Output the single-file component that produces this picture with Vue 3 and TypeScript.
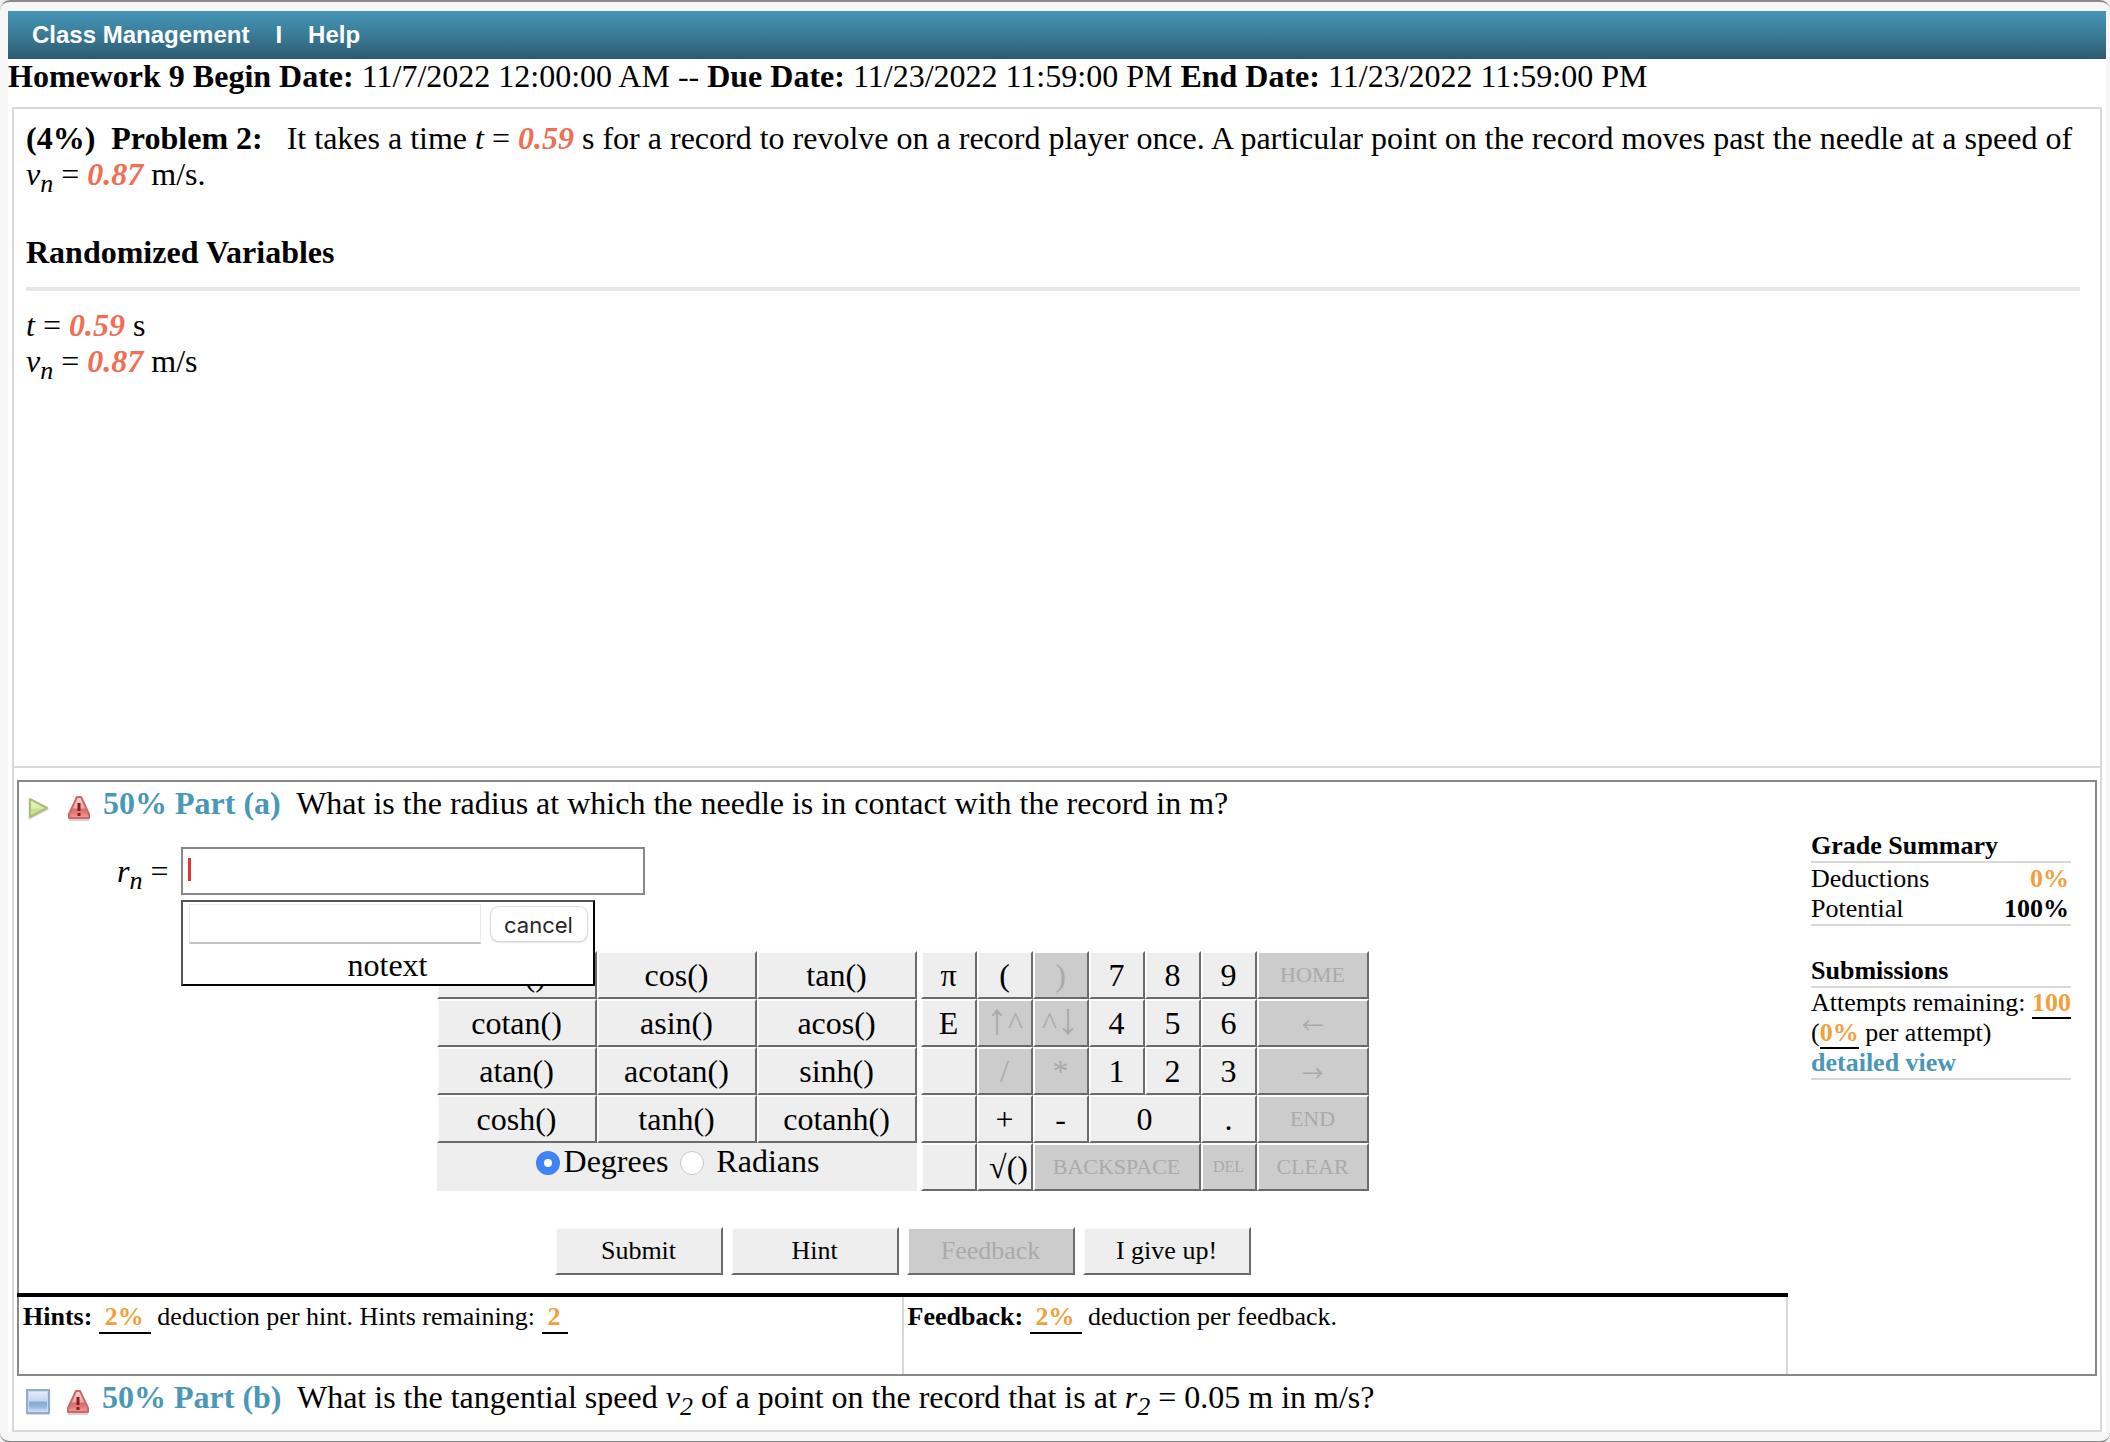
<script setup lang="ts">
import { ref } from 'vue'

interface Key {
  label: string
  disabled?: boolean
  size?: 'small' | 'tiny' | 'arrow'
  span?: 'two' | 'three'
  shifted?: boolean
}

const functionKeys: string[] = [
  'sin()', 'cos()', 'tan()',
  'cotan()', 'asin()', 'acos()',
  'atan()', 'acotan()', 'sinh()',
  'cosh()', 'tanh()', 'cotanh()',
]

const padKeys: Key[] = [
  { label: 'π' },
  { label: '(' },
  { label: ')', disabled: true },
  { label: '7' },
  { label: '8' },
  { label: '9' },
  { label: 'HOME', disabled: true, size: 'small' },
  { label: 'E' },
  { label: '↑^', disabled: true },
  { label: '^↓', disabled: true },
  { label: '4' },
  { label: '5' },
  { label: '6' },
  { label: '←', disabled: true, size: 'arrow' },
  { label: '' },
  { label: '/', disabled: true },
  { label: '*', disabled: true },
  { label: '1' },
  { label: '2' },
  { label: '3' },
  { label: '→', disabled: true, size: 'arrow' },
  { label: '' },
  { label: '+' },
  { label: '-' },
  { label: '0', span: 'two' },
  { label: '.' },
  { label: 'END', disabled: true, size: 'small' },
  { label: '' },
  { label: '√()', shifted: true },
  { label: 'BACKSPACE', disabled: true, size: 'small', span: 'three' },
  { label: 'DEL', disabled: true, size: 'tiny' },
  { label: 'CLEAR', disabled: true, size: 'small' },
]

const actions: Key[] = [
  { label: 'Submit' },
  { label: 'Hint' },
  { label: 'Feedback', disabled: true },
  { label: 'I give up!' },
]

const answer = ref('')
const macro = ref('')
const angle = ref('degrees')

// Splits off the vertical arrows, which are set larger than the caret beside them.
function pieces(label: string): string[] {
  return label.split(/([↑↓])/).filter((s) => s !== '')
}

function isVertical(piece: string): boolean {
  return piece === '↑' || piece === '↓'
}
</script>

<template>
  <div class="window">
    <div class="page">
      <nav class="menu">
        <a href="#">Class Management</a>
        <span>I</span>
        <a href="#">Help</a>
      </nav>

      <p class="dates">
        <b>Homework 9 Begin Date:</b> 11/7/2022 12:00:00 AM -- <b>Due Date:</b> 11/23/2022 11:59:00 PM
        <b>End Date:</b> 11/23/2022 11:59:00 PM
      </p>

      <main class="assignment">
        <section class="problem">
          <p>
            <b>(4%)&nbsp; Problem 2:</b>&nbsp;&nbsp; It takes a time <i>t</i> = <em>0.59</em> s for a record to
            revolve on a record player once. A particular point on the record moves past the needle at a speed of
            <i>v<sub>n</sub></i> = <em>0.87</em> m/s.
          </p>
          <h2>Randomized Variables</h2>
          <hr />
          <p><i>t</i> = <em>0.59</em> s</p>
          <p><i>v<sub>n</sub></i> = <em>0.87</em> m/s</p>
        </section>

        <section class="part">
          <div class="work">
            <div class="question">
              <svg class="icon" viewBox="0 0 24 26" aria-hidden="true">
                <defs>
                  <linearGradient id="play" x1="0" y1="0" x2="0" y2="1">
                    <stop offset="0" stop-color="#e9f2c4" />
                    <stop offset="0.5" stop-color="#dcebae" />
                    <stop offset="0.6" stop-color="#c6dd8c" />
                    <stop offset="1" stop-color="#d9eaaa" />
                  </linearGradient>
                </defs>
                <path d="M3 5 L20 14 L3 23 Z" fill="none" stroke="#dcdfd4" stroke-width="3" stroke-linejoin="round" />
                <path d="M3 4 L20 13 L3 22 Z" fill="url(#play)" stroke="#a9bf78" stroke-width="2" stroke-linejoin="round" />
              </svg>
              <svg class="icon" viewBox="0 0 24 26" aria-hidden="true">
                <defs>
                  <linearGradient id="warn" x1="0" y1="0" x2="0" y2="1">
                    <stop offset="0" stop-color="#f6d6d4" />
                    <stop offset="0.5" stop-color="#eda9a7" />
                    <stop offset="0.6" stop-color="#dd6a68" />
                    <stop offset="1" stop-color="#ec9a98" />
                  </linearGradient>
                </defs>
                <path d="M2 25 H22" stroke="#d9cfcf" stroke-width="2" />
                <path d="M10 2 H14 L22 19 V23 H2 V19 Z" fill="url(#warn)" stroke="#c9686a" stroke-width="2" stroke-linejoin="round" />
                <path d="M12 8 V16 M12 18 V21" stroke="#8c1a1c" stroke-width="3" />
              </svg>
              <h3><b>50% Part (a)</b>&nbsp; What is the radius at which the needle is in contact with the record in m?</h3>
            </div>

            <div class="answer">
              <label for="answer"><i>r<sub>n</sub></i> =</label>
              <div class="field">
                <input id="answer" v-model="answer" type="text" autocomplete="off" />
                <div class="popup">
                  <div class="popup-row">
                    <input v-model="macro" type="text" aria-label="Macro" />
                    <button type="button">cancel</button>
                  </div>
                  <div class="popup-text">notext</div>
                </div>
              </div>
            </div>

            <div class="keyboard">
              <div class="functions">
                <button v-for="k in functionKeys" :key="k" type="button" class="key">{{ k }}</button>
                <div class="angles">
                  <input id="deg" v-model="angle" type="radio" name="angle" value="degrees" />
                  <label for="deg">Degrees</label>
                  <input id="rad" v-model="angle" type="radio" name="angle" value="radians" />
                  <label for="rad" class="spaced">Radians</label>
                </div>
              </div>
              <div class="pad">
                <button
                  v-for="(k, i) in padKeys"
                  :key="i"
                  type="button"
                  class="key"
                  :class="[k.size, k.span, { shifted: k.shifted }]"
                  :disabled="k.disabled"
                ><span v-for="(p, j) in pieces(k.label)" :key="j" :class="{ tall: isVertical(p) }">{{ p }}</span></button>
              </div>
            </div>

            <div class="actions">
              <button v-for="a in actions" :key="a.label" type="button" class="key" :disabled="a.disabled">{{ a.label }}</button>
            </div>

            <div class="hints">
              <div>
                <b>Hints:</b> <span class="value padded">2%</span> deduction per hint. Hints remaining:
                <span class="value padded">2</span>
              </div>
              <div><b>Feedback:</b> <span class="value padded">2%</span> deduction per feedback.</div>
            </div>
          </div>

          <aside class="summary">
            <h4>Grade Summary</h4>
            <table>
              <tbody>
                <tr>
                  <th scope="row">Deductions</th>
                  <td class="amount">0%</td>
                </tr>
                <tr>
                  <th scope="row">Potential</th>
                  <td>100%</td>
                </tr>
              </tbody>
            </table>
            <h4 class="second">Submissions</h4>
            <div class="attempts">
              <div>Attempts remaining: <span class="value">100</span></div>
              <div>(<span class="value">0%</span> per attempt)</div>
              <div><a href="#">detailed view</a></div>
            </div>
          </aside>
        </section>

        <div class="question last">
          <svg class="icon" viewBox="0 0 24 26" aria-hidden="true">
            <defs>
              <linearGradient id="box" x1="0" y1="0" x2="0" y2="1">
                <stop offset="0" stop-color="#e3ecf8" />
                <stop offset="0.45" stop-color="#c3d6ee" />
                <stop offset="0.55" stop-color="#86abda" />
                <stop offset="0.75" stop-color="#8fb2de" />
                <stop offset="1" stop-color="#c4daf2" />
              </linearGradient>
            </defs>
            <path d="M1 25 H23" stroke="#d6d9de" stroke-width="2" />
            <rect x="1" y="1" width="22" height="23" fill="#c9daee" stroke="#93abc8" stroke-width="2" />
            <rect x="3" y="3" width="18" height="19" fill="url(#box)" />
          </svg>
          <svg class="icon" viewBox="0 0 24 26" aria-hidden="true">
            <path d="M2 25 H22" stroke="#d9cfcf" stroke-width="2" />
            <path d="M10 2 H14 L22 19 V23 H2 V19 Z" fill="url(#warn)" stroke="#c9686a" stroke-width="2" stroke-linejoin="round" />
            <path d="M12 8 V16 M12 18 V21" stroke="#8c1a1c" stroke-width="3" />
          </svg>
          <h3>
            <b>50% Part (b)</b>&nbsp; What is the tangential speed <i>v<sub>2</sub></i> of a point on the record that is at
            <i>r<sub>2</sub></i> = 0.05 m in m/s?
          </h3>
        </div>
      </main>
    </div>
  </div>
</template>

<style>
html {
  background: #f0f0f0;
}
</style>

<style scoped>
.window {
  box-sizing: border-box;
  min-height: 100vh;
  padding: 9px 4px 9px 8px;
  background: #f6f6f6;
  border: 0 solid #8b8888;
  border-width: 2px 0;
  border-radius: 10px;
  color: #000;
  font: 32px/36px "Liberation Serif", "Times New Roman", serif;
}

.page {
  background: #fff;
}

.menu {
  display: flex;
  align-items: center;
  gap: 26px;
  height: 48px;
  padding: 0 24px;
  background: linear-gradient(#4796b8, #3a7b97 50%, #2b5a6f);
  color: #fff;
  font: bold 24px/28px "Liberation Sans", Arial, sans-serif;
}

.menu a {
  color: inherit;
  text-decoration: none;
}

p,
h2,
h3,
h4 {
  margin: 0;
  font-size: inherit;
}

sub {
  font-size: 26px;
  line-height: 0;
}

.dates {
  line-height: 34px;
}

.assignment {
  margin: 14px 4px 0;
  border: 2px solid #d8d8d8;
}

.problem {
  box-sizing: border-box;
  min-height: 659px;
  padding: 11px 20px 0 12px;
  border-bottom: 2px solid #d8d8d8;
}

.problem em {
  color: #ee6f54;
  font-weight: bold;
}

.problem h2 {
  margin-top: 42px;
}

.problem hr {
  height: 4px;
  margin: 17px 0 16px;
  border: 0;
  background: #e6e6e6;
}

.part {
  display: flex;
  margin: 12px 3px 0;
  border: 2px solid #888;
}

.work {
  flex: 1;
  padding-top: 3px;
}

.question {
  display: flex;
  align-items: flex-start;
  padding-left: 8px;
}

.question h3 {
  font-weight: normal;
}

.question h3 b {
  color: #4a97b8;
}

.question.last {
  padding: 3px 12px 15px;
}

.icon {
  flex: none;
  width: 24px;
  height: 26px;
  margin: 10px 16px 0 0;
}

.icon + .icon {
  margin-right: 12px;
}

.answer {
  display: flex;
  align-items: center;
  margin-top: 26px;
  padding-left: 98px;
}

.answer label {
  margin-right: 12px;
}

.field {
  position: relative;
}

.field::before {
  content: "";
  position: absolute;
  top: 11px;
  left: 7px;
  width: 3px;
  height: 23px;
  background: #e6352b;
}

#answer {
  display: block;
  box-sizing: border-box;
  width: 464px;
  height: 48px;
  padding: 0 6px;
  border: 2px solid #888;
  background: #fff;
  font: inherit;
}

.popup {
  position: absolute;
  z-index: 1;
  top: 53px;
  left: 0;
  box-sizing: border-box;
  width: 414px;
  height: 86px;
  padding: 2px 6px 0;
  border: 2px solid #000;
  border-color: #555 #000 #000 #555;
  background: #fff;
}

.popup-row {
  display: flex;
  align-items: center;
  justify-content: space-between;
}

.popup-row input {
  box-sizing: border-box;
  width: 292px;
  height: 40px;
  padding: 0 4px;
  border: 1px solid #ebebeb;
  border-bottom: 2px solid #c4c4c4;
  font: inherit;
}

.popup-row button {
  width: 96px;
  height: 34px;
  padding: 2px 0 0;
  border: 0;
  border-radius: 8px;
  background: #fff;
  box-shadow: 0 0 1px 1px #dcdcdc, 0 1px 2px #aaa;
  color: #262626;
  font: 22px/28px Inter, sans-serif;
}

.popup-text {
  margin-top: 3px;
  text-align: center;
}

.keyboard {
  display: flex;
  justify-content: center;
  gap: 4px;
  margin-top: 56px;
  padding-right: 2px;
}

.functions {
  display: grid;
  grid-template-columns: repeat(3, 160px);
  grid-auto-rows: 48px;
}

.pad {
  display: grid;
  grid-template-columns: repeat(6, 56px) 112px;
  grid-auto-rows: 48px;
}

.key {
  min-width: 0;
  padding: 0;
  border: 2px solid;
  border-color: #fcfcfc #6b6b6b #6b6b6b #fcfcfc;
  border-radius: 0;
  background: #eee;
  color: #000;
  font: inherit;
}

.key:disabled {
  background: #ccc;
  color: #aaa;
}

.small {
  font-size: 22px;
}

.tiny {
  font-size: 16px;
}

.arrow {
  font: 22px/26px "Noto Sans CJK JP", sans-serif;
}

.tall {
  font-size: 44px;
  line-height: 0;
}

.two {
  grid-column: span 2;
}

.three {
  grid-column: span 3;
}

.shifted {
  padding-left: 8px;
}

.angles {
  grid-column: 1 / -1;
  display: flex;
  align-items: flex-start;
  justify-content: center;
  padding-right: 10px;
  background: #eee;
}

.angles input {
  appearance: none;
  box-sizing: border-box;
  width: 24px;
  height: 24px;
  margin: 8px 4px 0 12px;
  border: 1px solid #c8c8c8;
  border-radius: 50%;
  background: #fff;
}

.angles input:checked {
  border: 8px solid #3f83f7;
}

.angles .spaced {
  margin-left: 8px;
}

.actions {
  display: flex;
  justify-content: center;
  gap: 8px;
  margin-top: 36px;
  padding-right: 2px;
}

.actions .key {
  width: 168px;
  height: 48px;
  font-size: 26px;
}

.hints {
  display: grid;
  grid-template-columns: 1fr 1fr;
  margin: 18px 0 0 -2px;
  padding-left: 2px;
  border-top: 4px solid #000;
  font-size: 26px;
  line-height: 30px;
}

.hints > div {
  min-height: 72px;
  padding: 5px 4px 0;
  border-right: 2px solid #d8d8d8;
}

.value {
  border-bottom: 2px solid #000;
  color: #f2a03c;
  font-weight: bold;
}

.padded {
  padding: 0 7px 1px 6px;
}

.summary {
  flex: none;
  box-sizing: border-box;
  width: 307px;
  padding: 49px 24px 0 23px;
  font-size: 26px;
  line-height: 30px;
}

.summary h4 {
  border-bottom: 2px solid #d8d8d8;
}

.summary .second {
  margin-top: 30px;
}

.summary table {
  width: 100%;
  padding-top: 1px;
  border-spacing: 0;
  border-bottom: 2px solid #d8d8d8;
}

.summary th {
  padding: 0;
  font-weight: normal;
  text-align: left;
}

.summary td {
  padding: 0 2px 0 0;
  font-weight: bold;
  text-align: right;
}

.summary .amount {
  color: #f2a03c;
}

.attempts {
  border-bottom: 2px solid #d8d8d8;
  white-space: nowrap;
}

.attempts a {
  color: #4a97b8;
  font-weight: bold;
  text-decoration: none;
}
</style>
